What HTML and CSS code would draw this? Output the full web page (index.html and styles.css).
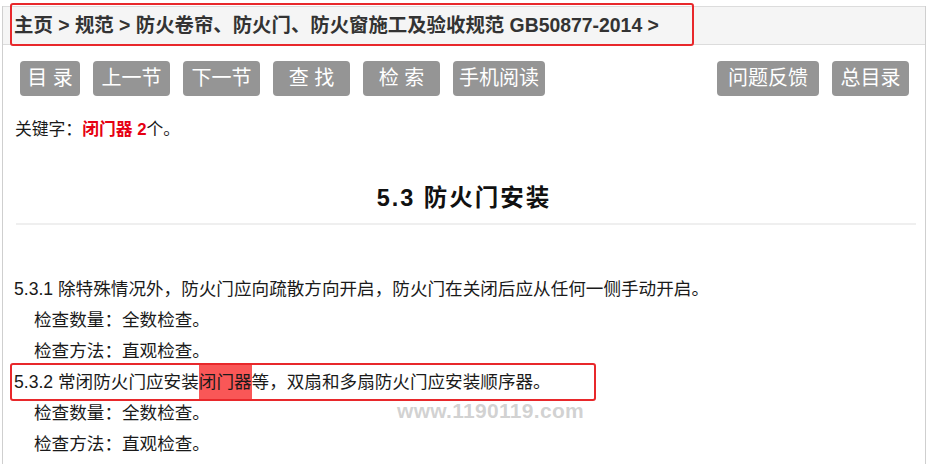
FILE: index.html
```html
<!DOCTYPE html>
<html lang="zh-CN">
<head>
<meta charset="utf-8">
<title>5.3 防火门安装</title>
<link rel="stylesheet" href="styles.css">
</head>
<body>
<div class="page">
  <div class="crumb">主页 &gt; 规范 &gt; 防火卷帘、防火门、防火窗施工及验收规范 GB50877-2014 &gt;</div>
  <div class="toolbar">
    <div class="group">
      <span class="btn">目 录</span>
      <span class="btn wide">上一节</span>
      <span class="btn wide">下一节</span>
      <span class="btn wide">查 找</span>
      <span class="btn wide">检 索</span>
      <span class="btn">手机阅读</span>
    </div>
    <div class="group">
      <span class="btn w102">问题反馈</span>
      <span class="btn wide">总目录</span>
    </div>
  </div>
  <div class="keyword">关键字：<b class="hit">闭门器 2</b>个。</div>
  <h1 class="title">5.3 防火门安装</h1>
  <div class="rule"></div>
  <div class="content">
    <p class="clause">5.3.1 除特殊情况外，防火门应向疏散方向开启，防火门在关闭后应从任何一侧手动开启。</p>
    <p class="check">检查数量：全数检查。</p>
    <p class="check">检查方法：直观检查。</p>
    <p class="clause">5.3.2 常闭防火门应安装<span class="mark">闭门器</span>等，双扇和多扇防火门应安装顺序器。</p>
    <p class="check">检查数量：全数检查。</p>
    <p class="check">检查方法：直观检查。</p>
  </div>
  <div class="watermark">www.1190119.com</div>
</div>
<div class="note note-crumb"></div>
<div class="note note-clause"></div>
</body>
</html>
```

FILE: styles.css
```css
html, body {
  margin: 0;
  padding: 0;
  background: #fff;
}
body {
  font-family: "Liberation Sans", "Noto Sans CJK SC", sans-serif;
  color: #1a1a1a;
  position: relative;
  height: 464px;
  overflow: hidden;
}
.page {
  margin: 6px 2px 0 2px;
  border-left: 1px solid #cfcfcf;
  border-right: 1px solid #cfcfcf;
  height: 470px;
  position: relative;
}
.crumb {
  height: 37px;
  line-height: 37px;
  background: #f5f5f5;
  border-top: 1px solid #dcdcdc;
  border-bottom: 1px solid #dcdcdc;
  padding-left: 11px;
  font-size: 19.4px;
  font-weight: bold;
  color: #333;
  white-space: nowrap;
}
.toolbar {
  display: flex;
  justify-content: space-between;
  margin-top: 16px;
  padding: 0 16px 0 17px;
}
.group {
  display: flex;
  gap: 13px;
}
.btn {
  display: block;
  box-sizing: border-box;
  height: 35px;
  line-height: 35px;
  padding: 0 6px;
  min-width: 60px;
  text-align: center;
  background: #959595;
  color: #fff;
  border-radius: 4px;
  font-size: 20px;
  white-space: pre;
}
.btn.wide { min-width: 77px; }
.btn.w102 { min-width: 102px; }
.keyword {
  margin-top: 22px;
  padding-left: 12px;
  font-size: 16.8px;
  line-height: 24px;
  height: 24px;
}
.hit {
  color: #e60012;
  font-weight: bold;
}
.title {
  margin: 41px 0 0 0;
  text-align: center;
  font-size: 23.5px;
  line-height: 30px;
  font-weight: bold;
  letter-spacing: 2px;
  color: #111;
}
.rule {
  margin: 10px 9px 0 13px;
  height: 2px;
  background: #efefef;
}
.content {
  margin-top: 49px;
  padding-left: 11px;
  font-size: 17.6px;
  line-height: 31px;
}
.content p {
  margin: 0;
  white-space: nowrap;
}
.content .check {
  padding-left: 20px;
}
.mark {
  background: #f95757;
  padding: 8px 0;
}
.watermark {
  position: absolute;
  left: 394px;
  top: 393px;
  font-size: 21px;
  font-weight: bold;
  letter-spacing: 0.3px;
  color: rgba(165, 165, 165, 0.5);
  white-space: nowrap;
}
.note {
  position: absolute;
  box-sizing: border-box;
  border: 2px solid #e8282b;
  border-radius: 3px;
}
.note-crumb {
  left: 10px;
  top: 3px;
  width: 684px;
  height: 43px;
}
.note-clause {
  left: 10px;
  top: 363px;
  width: 586px;
  height: 38px;
}
```
